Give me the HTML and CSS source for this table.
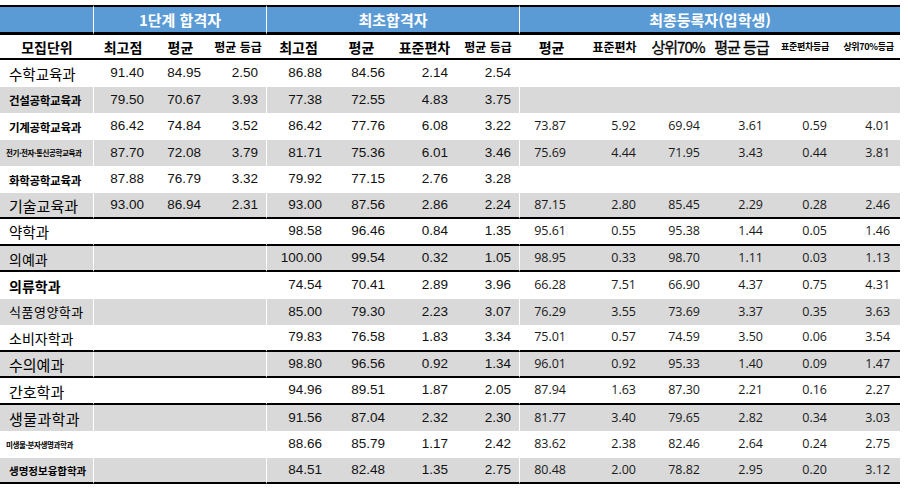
FILE: index.html
```html
<!DOCTYPE html>
<html lang="ko">
<head>
<meta charset="utf-8">
<title>모집단위별 성적</title>
<link rel="stylesheet" href="styles.css">
</head>
<body>
<table class="sheet">
  <colgroup>
    <col class="c94"><col class="c58"><col class="c57"><col class="c58">
    <col class="c63"><col class="c63"><col class="c63"><col class="c64">
    <col class="c63"><col class="c63"><col class="c64"><col class="c63"><col class="c64"><col class="c63">
  </colgroup>
  <tr class="top">
    <td class="ge"></td>
    <td class="ge" colspan="3">1단계 합격자</td>
    <td class="ge" colspan="4">최초합격자</td>
    <td colspan="6">최종등록자(입학생)</td>
  </tr>
  <tr class="sub">
    <td>모집단위</td>
    <td>최고점</td><td>평균</td><td class="s12">평균 등급</td>
    <td>최고점</td><td>평균</td><td>표준편차</td><td class="s12">평균 등급</td>
    <td>평균</td><td class="s12">표준편차</td><td class="big">상위70%</td><td class="big">평균 등급</td><td class="tiny">표준편차등급</td><td class="tiny">상위70%등급</td>
  </tr>
  <tr>
    <td class="lab r15">수학교육과</td>
    <td class="n">91.40</td><td class="n">84.95</td><td class="n ge">2.50</td>
    <td class="n">86.88</td><td class="n">84.56</td><td class="n">2.14</td><td class="n ge">2.54</td>
    <td class="f f1"></td><td class="f"></td><td class="f"></td><td class="f"></td><td class="f"></td><td class="f"></td>
  </tr>
  <tr class="g">
    <td class="lab b12">건설공학교육과</td>
    <td class="n">79.50</td><td class="n">70.67</td><td class="n ge">3.93</td>
    <td class="n">77.38</td><td class="n">72.55</td><td class="n">4.83</td><td class="n ge">3.75</td>
    <td class="f f1"></td><td class="f"></td><td class="f"></td><td class="f"></td><td class="f"></td><td class="f"></td>
  </tr>
  <tr>
    <td class="lab b12">기계공학교육과</td>
    <td class="n">86.42</td><td class="n">74.84</td><td class="n ge">3.52</td>
    <td class="n">86.42</td><td class="n">77.76</td><td class="n">6.08</td><td class="n ge">3.22</td>
    <td class="f f1">73.87</td><td class="f">5.92</td><td class="f">69.94</td><td class="f">3.61</td><td class="f">0.59</td><td class="f">4.01</td>
  </tr>
  <tr class="g">
    <td class="lab b7">전기·전자·통신공학교육과</td>
    <td class="n">87.70</td><td class="n">72.08</td><td class="n ge">3.79</td>
    <td class="n">81.71</td><td class="n">75.36</td><td class="n">6.01</td><td class="n ge">3.46</td>
    <td class="f f1">75.69</td><td class="f">4.44</td><td class="f">71.95</td><td class="f">3.43</td><td class="f">0.44</td><td class="f">3.81</td>
  </tr>
  <tr>
    <td class="lab b12">화학공학교육과</td>
    <td class="n">87.88</td><td class="n">76.79</td><td class="n ge">3.32</td>
    <td class="n">79.92</td><td class="n">77.15</td><td class="n">2.76</td><td class="n ge">3.28</td>
    <td class="f f1"></td><td class="f"></td><td class="f"></td><td class="f"></td><td class="f"></td><td class="f"></td>
  </tr>
  <tr class="g sep">
    <td class="lab r16">기술교육과</td>
    <td class="n">93.00</td><td class="n">86.94</td><td class="n ge">2.31</td>
    <td class="n">93.00</td><td class="n">87.56</td><td class="n">2.86</td><td class="n ge">2.24</td>
    <td class="f f1">87.15</td><td class="f">2.80</td><td class="f">85.45</td><td class="f">2.29</td><td class="f">0.28</td><td class="f">2.46</td>
  </tr>
  <tr class="sep">
    <td class="lab r15">약학과</td>
    <td class="n"></td><td class="n"></td><td class="n ge"></td>
    <td class="n">98.58</td><td class="n">96.46</td><td class="n">0.84</td><td class="n ge">1.35</td>
    <td class="f f1">95.61</td><td class="f">0.55</td><td class="f">95.38</td><td class="f">1.44</td><td class="f">0.05</td><td class="f">1.46</td>
  </tr>
  <tr class="g sep">
    <td class="lab r14">의예과</td>
    <td class="n"></td><td class="n"></td><td class="n ge"></td>
    <td class="n">100.00</td><td class="n">99.54</td><td class="n">0.32</td><td class="n ge">1.05</td>
    <td class="f f1">98.95</td><td class="f">0.33</td><td class="f">98.70</td><td class="f">1.11</td><td class="f">0.03</td><td class="f">1.13</td>
  </tr>
  <tr>
    <td class="lab b14">의류학과</td>
    <td class="n"></td><td class="n"></td><td class="n ge"></td>
    <td class="n">74.54</td><td class="n">70.41</td><td class="n">2.89</td><td class="n ge">3.96</td>
    <td class="f f1">66.28</td><td class="f">7.51</td><td class="f">66.90</td><td class="f">4.37</td><td class="f">0.75</td><td class="f">4.31</td>
  </tr>
  <tr class="g">
    <td class="lab r13">식품영양학과</td>
    <td class="n"></td><td class="n"></td><td class="n ge"></td>
    <td class="n">85.00</td><td class="n">79.30</td><td class="n">2.23</td><td class="n ge">3.07</td>
    <td class="f f1">76.29</td><td class="f">3.55</td><td class="f">73.69</td><td class="f">3.37</td><td class="f">0.35</td><td class="f">3.63</td>
  </tr>
  <tr class="sep">
    <td class="lab r14">소비자학과</td>
    <td class="n"></td><td class="n"></td><td class="n ge"></td>
    <td class="n">79.83</td><td class="n">76.58</td><td class="n">1.83</td><td class="n ge">3.34</td>
    <td class="f f1">75.01</td><td class="f">0.57</td><td class="f">74.59</td><td class="f">3.50</td><td class="f">0.06</td><td class="f">3.54</td>
  </tr>
  <tr class="g sep">
    <td class="lab r16">수의예과</td>
    <td class="n"></td><td class="n"></td><td class="n ge"></td>
    <td class="n">98.80</td><td class="n">96.56</td><td class="n">0.92</td><td class="n ge">1.34</td>
    <td class="f f1">96.01</td><td class="f">0.92</td><td class="f">95.33</td><td class="f">1.40</td><td class="f">0.09</td><td class="f">1.47</td>
  </tr>
  <tr class="sep">
    <td class="lab r16">간호학과</td>
    <td class="n"></td><td class="n"></td><td class="n ge"></td>
    <td class="n">94.96</td><td class="n">89.51</td><td class="n">1.87</td><td class="n ge">2.05</td>
    <td class="f f1">87.94</td><td class="f">1.63</td><td class="f">87.30</td><td class="f">2.21</td><td class="f">0.16</td><td class="f">2.27</td>
  </tr>
  <tr class="g">
    <td class="lab r16 wide">생물과학과</td>
    <td class="n"></td><td class="n"></td><td class="n ge"></td>
    <td class="n">91.56</td><td class="n">87.04</td><td class="n">2.32</td><td class="n ge">2.30</td>
    <td class="f f1">81.77</td><td class="f">3.40</td><td class="f">79.65</td><td class="f">2.82</td><td class="f">0.34</td><td class="f">3.03</td>
  </tr>
  <tr>
    <td class="lab b7">미생물·분자생명과학과</td>
    <td class="n"></td><td class="n"></td><td class="n ge"></td>
    <td class="n">88.66</td><td class="n">85.79</td><td class="n">1.17</td><td class="n ge">2.42</td>
    <td class="f f1">83.62</td><td class="f">2.38</td><td class="f">82.46</td><td class="f">2.64</td><td class="f">0.24</td><td class="f">2.75</td>
  </tr>
  <tr class="g sep">
    <td class="lab b10">생명정보융합학과</td>
    <td class="n"></td><td class="n"></td><td class="n ge"></td>
    <td class="n">84.51</td><td class="n">82.48</td><td class="n">1.35</td><td class="n ge">2.75</td>
    <td class="f f1">80.48</td><td class="f">2.00</td><td class="f">78.82</td><td class="f">2.95</td><td class="f">0.20</td><td class="f">3.12</td>
  </tr>
</table>
</body>
</html>
```
FILE: styles.css
```css
html, body {
  margin: 0;
  background: #ffffff;
}
body {
  padding-top: 5px;
  font-family: "Noto Sans CJK KR", "Noto Sans", sans-serif;
  color: #000;
}
.sheet {
  border-collapse: separate;
  border-spacing: 0;
  table-layout: fixed;
  width: 900px;
}
.c94 { width: 94px; }
.c58 { width: 58px; }
.c57 { width: 57px; }
.c63 { width: 63px; }
.c64 { width: 64px; }

.sheet td {
  padding: 0;
  vertical-align: middle;
  white-space: nowrap;
  overflow: hidden;
  line-height: 1.15;
}
.sheet tr { height: 26.5px; }

/* header row 1 */
.sheet tr.top { height: 30px; }
.top td {
  background: #5b9bd5;
  color: #ffffff;
  font-weight: bold;
  font-size: 15px;
  text-align: center;
  border-top: 2px solid #000;
  border-bottom: 3px solid #000;
}
/* header row 2 */
.sheet tr.sub { height: 25px; }
.sub td {
  font-weight: bold;
  font-size: 14px;
  text-align: center;
  border-bottom: 2px solid #000;
  padding-top: 1px;
}
.sub td.s12 { font-size: 12px; }
.sub td.big {
  font-size: 15px;
  font-weight: normal;
  letter-spacing: -1px;
  -webkit-text-stroke: 0.3px #000;
}
.sub td.tiny { font-size: 9px; letter-spacing: -0.3px; }

/* body rows */
.g td { background: #d9d9d9; }
.sep td { border-bottom: 2px solid #000; }
.sheet td.ge { border-right: 1px solid #ffffff; }
.lab {
  border-right: 1px solid #ffffff;
  padding-left: 9px !important;
  padding-top: 2px !important;
  text-align: left;
}
.r13 { font-size: 13px; letter-spacing: 0.5px; }
.r14 { font-size: 14px; }
.r15 { font-size: 14.5px; }
.r16 { font-size: 15px; }
.wide { letter-spacing: 0.4px; }
.b14 { font-size: 14px; font-weight: bold; }
.b12 { font-size: 11.5px; font-weight: bold; letter-spacing: -0.3px; }
.b10 { font-size: 10.5px; font-weight: bold; }
.b7 { font-size: 7.5px; font-weight: bold; letter-spacing: -0.4px; padding-left: 6px !important; }

.n {
  font-family: "Liberation Sans", Arial, sans-serif;
  font-size: 13.5px;
  text-align: right;
  padding-right: 8px !important;
  color: #111;
}
.f {
  font-family: "Open Sans", "Noto Sans", sans-serif;
  font-size: 12.5px;
  text-align: right;
  padding-right: 10px !important;
  color: #1a1a1a;
}
.f1 { padding-right: 17px !important; }
```
